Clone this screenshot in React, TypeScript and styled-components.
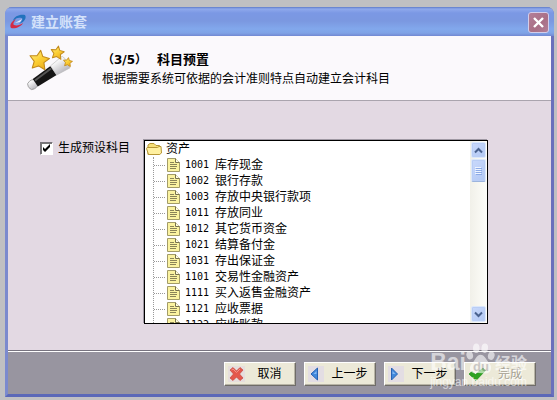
import React, { useState } from "react";
import styled, { createGlobalStyle, css } from "styled-components";

const GlobalStyle = createGlobalStyle`
  * { box-sizing: border-box; }
  body {
    margin: 0;
    background: #c0c0c2;
    color: #000;
    font: 12px/16px "Liberation Sans", "Noto Sans CJK SC", sans-serif;
  }
  button, input { font: inherit; }
`;

const Desktop = styled.div`
  height: 100vh;
  min-height: 260px;
  display: flex;
  padding: 7px 3px 3px 5px;
`;

const Dialog = styled.main`
  position: relative;
  flex: 1;
  min-width: 0;
  display: flex;
  flex-direction: column;
  border: 3px solid #7b8ace;
  border-top: 0;
  border-right-color: #6a70bc;
  border-bottom-color: #5b68b8;
  border-radius: 7px 7px 0 0;
  background: #7b8ace;
`;

const TitleBar = styled.header`
  flex: none;
  height: 29px;
  margin: 0 -3px;
  padding: 0 5px 0 5px;
  display: flex;
  align-items: center;
  gap: 4px;
  border-radius: 7px 7px 0 0;
  background: linear-gradient(#5f7cc8 0, #8fa9ec 2px, #7b98e4 6px, #7b98e0 14px, #82a8ec 22px, #7fa3e6 26px, #7288d2 29px);
`;

const Title = styled.h1`
  flex: 1;
  margin: 0;
  font-size: 14px;
  line-height: 20px;
  font-weight: 700;
  color: #d4e2fa;
`;

const CloseButton = styled.button`
  width: 21px;
  height: 21px;
  margin-top: 2px;
  padding: 0;
  display: grid;
  place-items: center;
  border: 1px solid #d3cdea;
  border-radius: 3px;
  background: linear-gradient(135deg, #b47f98, #a96f86 60%, #b27f98);
`;

const Banner = styled.section`
  flex: none;
  height: 65px;
  padding: 0 18px;
  display: flex;
  align-items: center;
  gap: 28px;
  background: #fbf9fc;
  border-bottom: 1px solid #aaa4ae;
`;

const BannerText = styled.div`
  padding-top: 1px;
`;

const StepTitle = styled.h2`
  margin: 0;
  font: 700 13px/20px "DejaVu Sans", "Noto Sans CJK SC", sans-serif;
  display: flex;
  gap: 10px;
`;

const StepCount = styled.span`
  font-size: 12px;
`;

const StepHint = styled.p`
  margin: 0;
  line-height: 18px;
`;

const Body = styled.section`
  flex: 1;
  min-height: 0;
  display: flex;
  align-items: stretch;
  gap: 14px;
  padding: 39px 63px 26px 32px;
  background: #e3d9e3;
`;

const CheckLabel = styled.label`
  flex: none;
  align-self: flex-start;
  display: flex;
  align-items: center;
  gap: 5px;
`;

const CheckBox = styled.input`
  appearance: none;
  width: 13px;
  height: 13px;
  margin: 0;
  border: 1px solid;
  border-color: #77737a #fff #fff #77737a;
  background: #fff;
  box-shadow: inset 1px 1px 0 #777;
  &:checked {
    background: #fff url("data:image/svg+xml,%3Csvg xmlns='http://www.w3.org/2000/svg' viewBox='0 0 11 11'%3E%3Cpath d='M2 4v3l2 2 5-5V1L4 6z'/%3E%3C/svg%3E") center / 11px 11px no-repeat;
  }
`;

const ListBox = styled.div`
  flex: 1;
  min-width: 0;
  display: flex;
  border: 1px solid #000;
  box-shadow: -1px -1px 0 #9f98a3;
  background: #fff;
`;

const Tree = styled.div`
  flex: 1;
  min-width: 0;
  overflow: hidden;
`;

const TreeRoot = styled.div`
  height: 16px;
  display: flex;
  align-items: center;
  gap: 4px;
  padding-left: 1px;
`;

const Accounts = styled.ul`
  list-style: none;
  margin: 0 0 0 8px;
  padding: 0;
  border-left: 1px dotted #999;
`;

const Account = styled.li`
  height: 16px;
  display: flex;
  align-items: center;
  white-space: nowrap;
  &::before {
    content: "";
    width: 11px;
    margin-right: 2px;
    border-top: 1px dotted #999;
  }
`;

const Code = styled.span`
  width: 30px;
  margin-left: 5px;
  font-family: "DejaVu Sans Mono", monospace;
  font-size: 10px;
`;

const ScrollBar = styled.div`
  flex: none;
  width: 17px;
  padding: 1px;
  display: flex;
  flex-direction: column;
  background: linear-gradient(90deg, #f1f0e9, #fdfdf9);
`;

const blueFace = css`
  width: 15px;
  padding: 0;
  display: grid;
  place-items: center;
  border: 1px solid #dce8fb;
  border-radius: 2px;
  background: linear-gradient(135deg, #c9d9fb, #b2c8f4);
  box-shadow: inset 0 0 0 1px #b9cdf5;
`;

const ScrollButton = styled.button`
  ${blueFace}
  height: 16px;
`;

const Thumb = styled.div`
  ${blueFace}
  height: 23px;
  margin: 1px 0 auto;
  border-bottom-color: #9cb4dd;
`;

const Footer = styled.footer`
  flex: none;
  height: 44px;
  display: flex;
  justify-content: flex-end;
  align-items: flex-start;
  gap: 8px;
  padding: 11px 15px 0;
  border-top: 1px solid #77737f;
  box-shadow: inset 0 1px 0 #fff;
  background: #9895a0;
`;

const ActionButton = styled.button`
  flex: none;
  width: 72px;
  height: 24px;
  padding: 0 3px;
  display: flex;
  align-items: center;
  border: 1px solid;
  border-color: #fff #6f6c68 #6f6c68 #fff;
  background: #ece9d8;
  box-shadow: inset -1px -1px 0 #b8b4a6;
  color: #000;
  &:disabled { color: #a5a194; text-shadow: 1px 1px 0 #fff; }
`;

const ActionText = styled.span`
  flex: 1;
  padding-left: 2px;
  text-align: center;
  white-space: nowrap;
`;

const Watermark = styled.div`
  position: absolute;
  right: 24px;
  bottom: 5px;
  color: #fff;
  opacity: 0.6;
  pointer-events: none;
  white-space: nowrap;
`;

const MarkRow = styled.div`
  display: flex;
  align-items: flex-end;
  font: 700 23px/26px "Liberation Sans", sans-serif;
`;

const MarkName = styled.span`
  font: 700 16px/26px "Noto Sans CJK SC", sans-serif;
`;

const MarkSite = styled.div`
  font: 12px/14px "Liberation Sans", sans-serif;
`;

const LogoIcon = () => (
  <svg width="17" height="16" viewBox="0 0 17 16" aria-hidden="true">
    <path d="M3 7C4 2 10 0 15 1Q17 4 13 8L9 10C12 7 13 5 12 4C8 3 6 4 3 7Z" fill="#2272bd" />
    <path d="M13 9C11 13 5 15 1 14C-1 11 2 7 6 5C3 9 3 10 4 11C7 12 10 11 13 9Z" fill="#d52b45" />
    <path d="M5 9L12 5L10 8Z" fill="#e9effb" />
  </svg>
);

const star = "M10 0L13 6L20 7L15 12L17 19L10 16L4 19L5 12L0 7L7 6Z";

const WandIcon = () => (
  <svg width="48" height="48" viewBox="0 0 48 48" aria-hidden="true">
    <defs>
      <linearGradient id="wandStar" x1="0" y1="0" x2="1" y2="1">
        <stop offset="0" stopColor="#fff18b" />
        <stop offset="0.5" stopColor="#fbcf35" />
        <stop offset="1" stopColor="#e9a315" />
      </linearGradient>
      <linearGradient id="wandTip" x1="0" y1="0" x2="0" y2="1">
        <stop offset="0" stopColor="#fff" />
        <stop offset="1" stopColor="#b9b8be" />
      </linearGradient>
    </defs>
    <g transform="translate(6 41) rotate(-34)">
      <rect x="-4" y="-4.500" width="10" height="9" rx="4" fill="url(#wandTip)" stroke="#999" strokeWidth="0.8" />
      <path d="M4-4.500L26-5.500V5.500L4 4.500Z" fill="#151515" />
      <path d="M5-2L25-3" stroke="#555" strokeWidth="2" />
      <path d="M26-5.500L41-7Q44 0 41 7L26 5.500Z" fill="url(#wandTip)" stroke="#bbb" strokeWidth="0.6" />
    </g>
    <g fill="url(#wandStar)" stroke="#c28a1b" strokeLinejoin="round">
      <path d={star} transform="translate(5 5) rotate(8) scale(0.98)" strokeWidth="1.1" />
      <path d={star} transform="translate(26 1) rotate(10) scale(0.66)" strokeWidth="1.5" />
      <path d={star} transform="translate(38 13) rotate(8) scale(0.45)" strokeWidth="1.8" />
    </g>
  </svg>
);

const FolderIcon = () => (
  <svg width="16" height="14" viewBox="0 0 16 14" aria-hidden="true">
    <path d="M2 12.5V3L4 1.5H8L10 3.5H13.5V12.5Z" fill="#f6df78" stroke="#b79736" />
    <path d="M2.5 12.5L.5 6.5Q.5 5.5 2 5.5H11.5L13 4.5H15L15.5 11L13.5 12.5Z" fill="#fff0a0" stroke="#b79736" />
  </svg>
);

const DocIcon = () => (
  <svg width="13" height="14" viewBox="0 0 13 14" aria-hidden="true">
    <path d="M.5.5H8.5L12.5 4.5V13.5H.5Z" fill="#fbf3a0" stroke="#a39c68" />
    <path d="M8.5.5V4.5H12.5" fill="#fffde0" stroke="#77714e" />
    <path d="M3 4.5H7M3 6.5H10M3 8.5H10M3 10.5H9" stroke="#8b8458" />
  </svg>
);

const Chevron = ({ down = false }: { down?: boolean }) => (
  <svg width="9" height="7" viewBox="0 0 9 7" aria-hidden="true">
    <path d={down ? "M1 1.5L4.5 5L8 1.5" : "M1 5.5L4.5 2L8 5.5"} fill="none" stroke="#4a628f" strokeWidth="2" />
  </svg>
);

const Grip = () => (
  <svg width="7" height="8" viewBox="0 0 7 8" aria-hidden="true">
    <path d="M0 .5H6M0 2.5H6M0 4.5H6M0 6.5H6" stroke="#eef4ff" />
    <path d="M1 1.5H7M1 3.5H7M1 5.5H7M1 7.5H7" stroke="#8caae6" />
  </svg>
);

const CancelIcon = () => (
  <svg width="17" height="16" viewBox="0 0 17 16" aria-hidden="true">
    <rect width="17" height="16" fill="#e6dedd" />
    <path d="M2 4L5 1.500L8.500 5L12 1.500L15 4L11.500 8L15 12L12 14.500L8.500 11L5 14.500L2 12L5.500 8Z" fill="#e4574b" stroke="#c7443c" strokeWidth="0.7" />
    <path d="M3.500 4L5 3L8.500 6.500L12 3" fill="none" stroke="#f39186" />
  </svg>
);

const ArrowIcon = ({ next = false }: { next?: boolean }) => (
  <svg width="17" height="16" viewBox="0 0 17 16" aria-hidden="true">
    <rect width="16" height="16" fill="#e3dde3" />
    <path d={next ? "M3.500 2L9.500 8L3.500 14Z" : "M9.500 2L3 8L9.500 14Z"} fill="#4389dc" stroke="#2863b4" />
    <path d={next ? "M4.500 5L7.500 8H4.500Z" : "M8.500 5L5.500 8H8.500Z"} fill="#86b9f4" />
  </svg>
);

const CheckIcon = () => (
  <svg width="18" height="16" viewBox="0 0 18 16" aria-hidden="true">
    <path d="M1 8L4 5.500L7.500 8.500L15 2L17.500 4.500L8 14.500Z" fill="#2fa322" stroke="#168a14" strokeWidth="0.7" />
  </svg>
);

const PawIcon = () => (
  <svg width="29" height="33" viewBox="0 0 31 34" aria-hidden="true">
    <g fill="#fff">
      <ellipse cx="4" cy="13.500" rx="3.500" ry="4.500" transform="rotate(-15 4 13.500)" />
      <ellipse cx="11" cy="6" rx="3.500" ry="5" />
      <ellipse cx="20" cy="6" rx="3.500" ry="5" transform="rotate(8 20 6)" />
      <ellipse cx="27" cy="14" rx="3.500" ry="4.500" transform="rotate(15 27 14)" />
      <path d="M15.500 13C20 13 21 18 25 22C29 27 26 33 21 33C17 33 14 32 10 33C5 33 2 28 6 23C10 19 11 13 15.500 13Z" />
    </g>
    <text x="16" y="30" textAnchor="middle" fontFamily="Liberation Sans, sans-serif" fontWeight="700" fontSize="14" fill="#b4b1b8">du</text>
  </svg>
);

const accounts: [string, string][] = [
  ["1001", "库存现金"],
  ["1002", "银行存款"],
  ["1003", "存放中央银行款项"],
  ["1011", "存放同业"],
  ["1012", "其它货币资金"],
  ["1021", "结算备付金"],
  ["1031", "存出保证金"],
  ["1101", "交易性金融资产"],
  ["1111", "买入返售金融资产"],
  ["1121", "应收票据"],
  ["1122", "应收账款"],
];

export default function App() {
  const [preset, setPreset] = useState(true);
  return (
    <Desktop>
      <GlobalStyle />
      <Dialog>
        <TitleBar>
          <LogoIcon />
          <Title>建立账套</Title>
          <CloseButton type="button" aria-label="关闭">
            <svg width="13" height="13" viewBox="0 0 13 13" aria-hidden="true">
              <path d="M2 2L11 11M11 2L2 11" stroke="#fff" strokeWidth="2.4" />
            </svg>
          </CloseButton>
        </TitleBar>
        <Banner>
          <WandIcon />
          <BannerText>
            <StepTitle>
              <StepCount>（3/5）</StepCount>
              <span>科目预置</span>
            </StepTitle>
            <StepHint>根据需要系统可依据的会计准则特点自动建立会计科目</StepHint>
          </BannerText>
        </Banner>
        <Body>
          <CheckLabel>
            <CheckBox type="checkbox" checked={preset} onChange={(e) => setPreset(e.target.checked)} />
            生成预设科目
          </CheckLabel>
          <ListBox>
            <Tree>
              <TreeRoot>
                <FolderIcon />
                资产
              </TreeRoot>
              <Accounts>
                {accounts.map(([code, name]) => (
                  <Account key={code}>
                    <DocIcon />
                    <Code>{code}</Code>
                    {name}
                  </Account>
                ))}
              </Accounts>
            </Tree>
            <ScrollBar>
              <ScrollButton type="button" aria-label="向上滚动"><Chevron /></ScrollButton>
              <Thumb><Grip /></Thumb>
              <ScrollButton type="button" aria-label="向下滚动"><Chevron down /></ScrollButton>
            </ScrollBar>
          </ListBox>
        </Body>
        <Footer>
          <ActionButton type="button"><CancelIcon /><ActionText>取消</ActionText></ActionButton>
          <ActionButton type="button"><ArrowIcon /><ActionText>上一步</ActionText></ActionButton>
          <ActionButton type="button"><ArrowIcon next /><ActionText>下一步</ActionText></ActionButton>
          <ActionButton type="button" disabled><CheckIcon /><ActionText>完成</ActionText></ActionButton>
        </Footer>
        <Watermark>
          <MarkRow>Bai<PawIcon /><MarkName>经验</MarkName></MarkRow>
          <MarkSite>jingyan.baidu.com</MarkSite>
        </Watermark>
      </Dialog>
    </Desktop>
  );
}
